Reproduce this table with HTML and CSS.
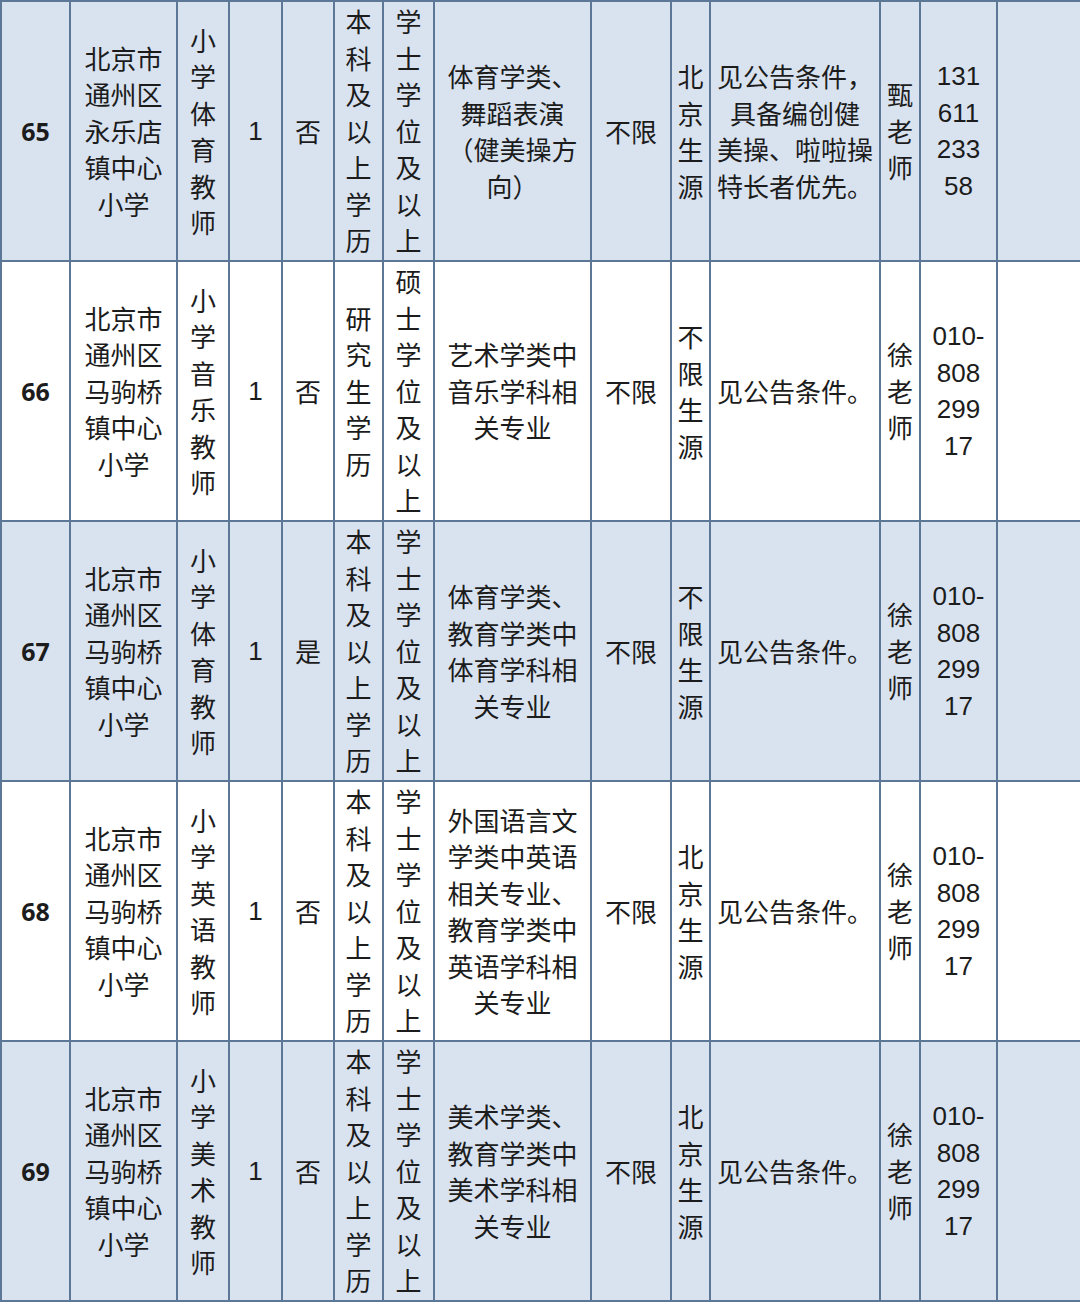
FILE: index.html
```html
<!DOCTYPE html>
<html lang="zh-CN">
<head>
<meta charset="utf-8">
<title>招聘岗位表</title>
<link rel="stylesheet" href="styles.css">
</head>
<body>
<table class="jobs">
  <colgroup>
    <col class="c-no"><col class="c-school"><col class="c-pos"><col class="c-num"><col class="c-yn">
    <col class="c-edu"><col class="c-deg"><col class="c-major"><col class="c-age"><col class="c-src">
    <col class="c-cond"><col class="c-contact"><col class="c-phone"><col class="c-note">
  </colgroup>
  <tbody>
    <tr class="alt">
      <td class="no">65</td>
      <td>北京市<br>通州区<br>永乐店<br>镇中心<br>小学</td>
      <td><div class="v">小学体育教师</div></td>
      <td class="num">1</td>
      <td>否</td>
      <td><div class="v">本科及以上学历</div></td>
      <td><div class="v">学士学位及以上</div></td>
      <td>体育学类、<br>舞蹈表演<br>（健美操方<br>向）</td>
      <td>不限</td>
      <td><div class="v">北京生源</div></td>
      <td>见公告条件，<br>具备编创健<br>美操、啦啦操<br>特长者优先。</td>
      <td><div class="v">甄老师</div></td>
      <td class="num">131<br>611<br>233<br>58</td>
      <td></td>
    </tr>
    <tr>
      <td class="no">66</td>
      <td>北京市<br>通州区<br>马驹桥<br>镇中心<br>小学</td>
      <td><div class="v">小学音乐教师</div></td>
      <td class="num">1</td>
      <td>否</td>
      <td><div class="v">研究生学历</div></td>
      <td><div class="v">硕士学位及以上</div></td>
      <td>艺术学类中<br>音乐学科相<br>关专业</td>
      <td>不限</td>
      <td><div class="v">不限生源</div></td>
      <td>见公告条件。</td>
      <td><div class="v">徐老师</div></td>
      <td class="num">010-<br>808<br>299<br>17</td>
      <td></td>
    </tr>
    <tr class="alt">
      <td class="no">67</td>
      <td>北京市<br>通州区<br>马驹桥<br>镇中心<br>小学</td>
      <td><div class="v">小学体育教师</div></td>
      <td class="num">1</td>
      <td>是</td>
      <td><div class="v">本科及以上学历</div></td>
      <td><div class="v">学士学位及以上</div></td>
      <td>体育学类、<br>教育学类中<br>体育学科相<br>关专业</td>
      <td>不限</td>
      <td><div class="v">不限生源</div></td>
      <td>见公告条件。</td>
      <td><div class="v">徐老师</div></td>
      <td class="num">010-<br>808<br>299<br>17</td>
      <td></td>
    </tr>
    <tr>
      <td class="no">68</td>
      <td>北京市<br>通州区<br>马驹桥<br>镇中心<br>小学</td>
      <td><div class="v">小学英语教师</div></td>
      <td class="num">1</td>
      <td>否</td>
      <td><div class="v">本科及以上学历</div></td>
      <td><div class="v">学士学位及以上</div></td>
      <td>外国语言文<br>学类中英语<br>相关专业、<br>教育学类中<br>英语学科相<br>关专业</td>
      <td>不限</td>
      <td><div class="v">北京生源</div></td>
      <td>见公告条件。</td>
      <td><div class="v">徐老师</div></td>
      <td class="num">010-<br>808<br>299<br>17</td>
      <td></td>
    </tr>
    <tr class="alt">
      <td class="no">69</td>
      <td>北京市<br>通州区<br>马驹桥<br>镇中心<br>小学</td>
      <td><div class="v">小学美术教师</div></td>
      <td class="num">1</td>
      <td>否</td>
      <td><div class="v">本科及以上学历</div></td>
      <td><div class="v">学士学位及以上</div></td>
      <td>美术学类、<br>教育学类中<br>美术学科相<br>关专业</td>
      <td>不限</td>
      <td><div class="v">北京生源</div></td>
      <td>见公告条件。</td>
      <td><div class="v">徐老师</div></td>
      <td class="num">010-<br>808<br>299<br>17</td>
      <td></td>
    </tr>
  </tbody>
</table>
</body>
</html>
```

FILE: styles.css
```css
html, body {
  margin: 0;
  padding: 0;
  overflow: hidden;
  background: #ffffff;
}

.jobs {
  border-collapse: collapse;
  table-layout: fixed;
  width: 1094px;
  font-family: "Noto Sans CJK SC", "Noto Sans", sans-serif;
  font-size: 26px;
  line-height: 36.5px;
  color: #1c1c1c;
}

.jobs td {
  border: 2px solid #5d7896;
  padding: 0;
  text-align: center;
  vertical-align: middle;
  white-space: nowrap;
}

.jobs tr {
  height: 260px;
  background: #ffffff;
}

.jobs tr.alt {
  background: #d9e3f0;
}

.c-no { width: 69px; }
.c-school { width: 107px; }
.c-pos { width: 52px; }
.c-num { width: 53px; }
.c-yn { width: 52px; }
.c-edu { width: 49px; }
.c-deg { width: 51px; }
.c-major { width: 157px; }
.c-age { width: 80px; }
.c-src { width: 39px; }
.c-cond { width: 170px; }
.c-contact { width: 40px; }
.c-phone { width: 77px; }
.c-note { width: 98px; }

.jobs td.no {
  font-family: "Open Sans", "Liberation Sans", sans-serif;
  font-weight: 700;
  font-size: 25px;
}

.jobs td.num {
  font-family: "Liberation Sans", "Noto Sans", sans-serif;
  font-size: 26px;
}

.v {
  width: 1em;
  margin: 0 auto;
  white-space: normal;
  word-break: break-all;
}
```
